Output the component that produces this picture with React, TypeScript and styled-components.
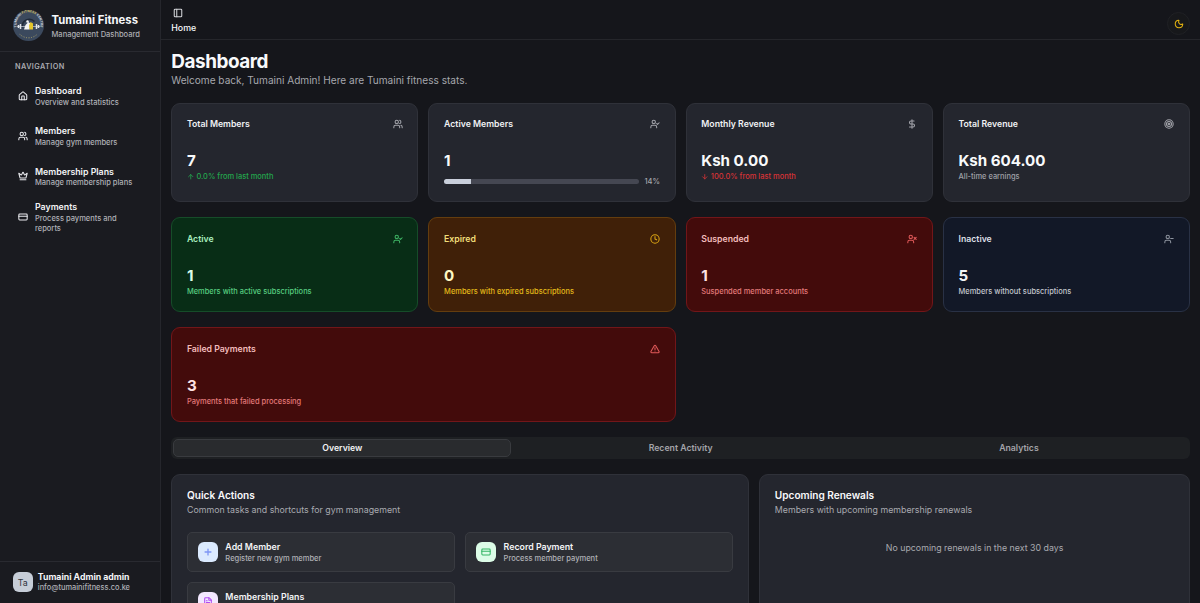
import React from "react";
import styled, { createGlobalStyle } from "styled-components";
import {
  ArrowDown,
  ArrowUp,
  Clock,
  CreditCard,
  Crown,
  DollarSign,
  FileText,
  House,
  Moon,
  PanelLeft,
  Plus,
  Target,
  TriangleAlert,
  UserCheck,
  UserMinus,
  Users,
  UserX,
} from "lucide-react";

const GlobalStyle = createGlobalStyle`
  *, *::before, *::after { box-sizing: border-box; }
  body {
    margin: 0;
    background: #15161b;
    color: #f8f9fb;
    font-family: Inter, "Liberation Sans", sans-serif;
    overflow: hidden;
  }
  svg { display: block; flex: none; }
  .lucide { stroke-width: 2.5; }
  h1, h2, h3, p { margin: 0; font-weight: inherit; font-size: inherit; }
`;

const Shell = styled.div`
  display: flex;
  height: 603px;
  overflow: hidden;
`;

const Sidebar = styled.aside`
  width: 161px;
  flex: none;
  display: flex;
  flex-direction: column;
  background: #1a1b20;
  border-right: 1px solid #25262c;
`;

const Brand = styled.header`
  display: flex;
  align-items: center;
  gap: 7.5px;
  height: 52px;
  padding: 0 0 1px 13px;
  border-bottom: 1px solid #292a30;
`;

const BrandText = styled.div`
  padding-top: 2px;
`;

const BrandName = styled.p`
  font-size: 11.28px;
  line-height: 14px;
  font-weight: 700;
  color: #f6f7f9;
`;

const BrandSub = styled.p`
  font-size: 7.52px;
  line-height: 10px;
  margin-top: 3px;
  font-weight: 500;
  color: #adaeb4;
`;

const NavLabel = styled.p`
  padding: 10px 15px 0;
  font-size: 7.3px;
  line-height: 10px;
  font-weight: 600;
  letter-spacing: 0.42px;
  color: #a9aaaf;
`;

const Nav = styled.nav`
  flex: 1;
  display: flex;
  flex-direction: column;
  padding: 3.7px 20px 0 17.6px;
`;

const NavItem = styled.a`
  display: flex;
  align-items: center;
  gap: 7.4px;
  height: 40.3px;
  color: #e9eaee;
`;

const ItemText = styled.div`
  flex: 1;
  padding-top: 1px;
`;

const ItemTitle = styled.p`
  font-size: 8.8px;
  line-height: 12px;
  font-weight: 600;
  color: #f3f4f6;
`;

const ItemSub = styled.p`
  margin-top: 0.6px;
  font-size: 7.52px;
  line-height: 10px;
  color: #b0b1b7;
  font-weight: 500;
`;

const UserBar = styled.footer`
  display: flex;
  align-items: center;
  gap: 5px;
  height: 42px;
  padding: 0 0 0.6px 12.6px;
  border-top: 1px solid #292a30;
`;

const Avatar = styled.div`
  display: grid;
  place-items: center;
  width: 20.2px;
  height: 20.2px;
  border-radius: 6px;
  background: #c6cdd7;
  color: #30343c;
  font-size: 8.8px;
`;

const UserName = styled.p`
  font-size: 8.72px;
  line-height: 11px;
  font-weight: 700;
  color: #f4f5f7;
`;

const UserMail = styled.p`
  font-size: 7.42px;
  line-height: 10px;
  font-weight: 500;
  color: #b0b1b7;
`;

const Main = styled.main`
  flex: 1;
  min-width: 0;
  display: flex;
  flex-direction: column;
`;

const TopBar = styled.header`
  display: flex;
  justify-content: space-between;
  height: 40px;
  flex: none;
  padding: 8px 10px 0 10.3px;
  border-bottom: 1px solid #25262b;
`;

const Crumbs = styled.div`
  display: flex;
  flex-direction: column;
  gap: 4.2px;
  font-size: 8.82px;
  line-height: 12px;
  font-weight: 500;
  svg { margin-left: 1.7px; color: #d4d5d9; }
`;

const ThemeButton = styled.button`
  display: grid;
  place-items: center;
  width: 23px;
  height: 23px;
  margin-top: 4px;
  padding: 0;
  border: 1px solid #202125;
  border-radius: 50%;
  background: #17181b;
  color: #e0b010;
`;

const Content = styled.div`
  display: flex;
  flex-direction: column;
  padding: 10px 10px 0 10.3px;
`;

const PageTitle = styled.h1`
  font-size: 18.9px;
  line-height: 23px;
  font-weight: 700;
  letter-spacing: -0.45px;
`;

const PageSub = styled.p`
  font-size: 10.08px;
  line-height: 14px;
  color: #a6a7ad;
`;

const CardGrid = styled.section`
  display: grid;
  grid-template-columns: repeat(4, 1fr);
  gap: 15.2px 10.08px;
  margin: 15.5px 0 15.1px;
`;

interface Tone {
  bg: string;
  border: string;
  title: string;
  value: string;
  note: string;
  icon: string;
}

const tones: Record<string, Tone> = {
  plain: { bg: "#24262e", border: "#2f3139", title: "#f0f1f4", value: "#f9fafb", note: "#a0a1a8", icon: "#a3a4ab" },
  green: { bg: "#082d16", border: "#164c29", title: "#a9edbf", value: "#dcfce7", note: "#58cd81", icon: "#3fb565" },
  yellow: { bg: "#402008", border: "#643d0e", title: "#f0de7a", value: "#fef9c3", note: "#e3b91a", icon: "#dba514" },
  red: { bg: "#430b0b", border: "#721619", title: "#f2bcbc", value: "#fee2e2", note: "#e37a7a", icon: "#e25a5a" },
  navy: { bg: "#121827", border: "#293145", title: "#dcdfe5", value: "#f3f4f6", note: "#c3c7ce", icon: "#8e949f" },
};

const StatCard = styled.article<{ $tone: Tone; $wide?: boolean; $tall?: boolean }>`
  grid-column: span ${(p) => (p.$wide ? 2 : 1)};
  height: ${(p) => (p.$tall ? "99.5px" : "94.6px")};
  padding: 14.6px 14.6px 0;
  border: 1px solid ${(p) => p.$tone.border};
  border-radius: 9px;
  background: ${(p) => p.$tone.bg};
`;

const StatHead = styled.div<{ $tone: Tone }>`
  display: flex;
  align-items: center;
  justify-content: space-between;
  height: 12.6px;
  margin-bottom: 20.5px;
  font-size: 8.72px;
  font-weight: 600;
  color: ${(p) => p.$tone.title};
  svg { color: ${(p) => p.$tone.icon}; }
`;

const StatValue = styled.p<{ $tone: Tone }>`
  font-size: 15.12px;
  line-height: 20.2px;
  font-weight: 700;
  color: ${(p) => p.$tone.value};
`;

const StatNote = styled.p<{ $color: string }>`
  display: flex;
  align-items: center;
  gap: 2px;
  margin-top: 0.7px;
  font-size: 7.47px;
  line-height: 10.1px;
  font-weight: 500;
  color: ${(p) => p.$color};
`;

const Meter = styled.div`
  display: flex;
  align-items: center;
  gap: 5px;
  margin-top: 5.3px;
  font-size: 7.56px;
  line-height: 10.1px;
  font-weight: 500;
  color: #a6a7ad;
`;

const Track = styled.div`
  flex: 1;
  height: 5px;
  border-radius: 3px;
  background: #454752;
  overflow: hidden;
`;

const Fill = styled.div`
  height: 100%;
  background: #c9cfdb;
`;

const TabList = styled.div`
  display: grid;
  grid-template-columns: repeat(3, 1fr);
  height: 22.7px;
  padding: 1.9px;
  border-radius: 6px;
  background: #1e2023;
`;

const Tab = styled.button<{ $active?: boolean }>`
  padding: 0 0 0.6px;
  border: 1px solid ${(p) => (p.$active ? "#393b3f" : "transparent")};
  border-radius: 5px;
  background: ${(p) => (p.$active ? "#292b2e" : "transparent")};
  color: ${(p) => (p.$active ? "#f1f2f4" : "#a3a4a9")};
  font: 600 8.72px Inter, "Liberation Sans", sans-serif;
`;

const Panels = styled.section`
  display: grid;
  grid-template-columns: repeat(7, 1fr);
  gap: 10.08px;
  margin-top: 15px;
`;

const Panel = styled.article<{ $span: number }>`
  grid-column: span ${(p) => p.$span};
  height: 200px;
  padding: 12.9px 14.7px;
  border: 1px solid #2f3139;
  border-radius: 9px;
  background: #24262e;
`;

const PanelTitle = styled.h2`
  font-size: 10.08px;
  line-height: 14px;
  font-weight: 600;
`;

const PanelSub = styled.p`
  margin-top: 1px;
  font-size: 8.82px;
  line-height: 14px;
  color: #a9aab0;
`;

const Empty = styled.p`
  margin-top: 23.8px;
  text-align: center;
  font-size: 8.82px;
  line-height: 13px;
  color: #a9aab0;
`;

const Actions = styled.div`
  display: grid;
  grid-template-columns: 1fr 1fr;
  gap: 10.08px;
  margin-top: 14.4px;
`;

const Action = styled.button`
  display: flex;
  align-items: center;
  gap: 7.6px;
  height: 40.3px;
  padding: 0 9.6px;
  border: 1px solid #393b41;
  border-radius: 5px;
  background: #2c2e34;
  text-align: left;
  font-family: inherit;
`;

const ActionIcon = styled.span<{ $bg: string; $fg: string }>`
  display: grid;
  place-items: center;
  width: 20.2px;
  height: 20.2px;
  border-radius: 6px;
  background: ${(p) => p.$bg};
  color: ${(p) => p.$fg};
  .lucide-plus { stroke-width: 3.2; }
`;

function Logo() {
  return (
    <svg width="31" height="31" viewBox="0 0 62 62">
      <defs>
        <path id="ring" d="M8.5 37 A24 24 0 1 1 53.5 37" />
      </defs>
      <circle cx="31" cy="31" r="31" fill="#3b495d" />
      <text fontSize="6.6" fontWeight="700" fill="#cfd5dd" fontFamily="Inter, sans-serif">
        <textPath href="#ring" startOffset="50%" textAnchor="middle">
          TUMAINI <tspan fill="#c9b764">FITNESS</tspan> CENTRE
        </textPath>
      </text>
      <path d="M19 35a14 14 0 0 1 24-12" fill="none" stroke="#202a39" strokeWidth="3" />
      <path d="M8 33h46" stroke="#bcc3cc" strokeWidth="1.6" />
      <path d="M11 30v6M15 28v10M47 28v10M51 30v6" stroke="#dfe3e8" strokeWidth="3" />
      <path d="M22 39l3-9 6-6 4 3-2 12z" fill="#f4f5f6" />
      <path d="M33 39l-1-8 3-7 5 3v12z" fill="#e3c62d" />
      <circle cx="29" cy="23" r="2.5" fill="#f1f2f3" />
      <path d="M13 48a25 25 0 0 0 36 0" fill="none" stroke="#a99f6b" strokeWidth="2" strokeDasharray="2 3" />
    </svg>
  );
}

const navItems = [
  { icon: House, title: "Dashboard", sub: "Overview and statistics" },
  { icon: Users, title: "Members", sub: "Manage gym members" },
  { icon: Crown, title: "Membership Plans", sub: "Manage membership plans" },
  { icon: CreditCard, title: "Payments", sub: "Process payments and reports" },
];

interface Stat {
  tone: string;
  title: string;
  value: string;
  icon: React.ElementType;
  note?: string;
  noteColor?: string;
  trend?: React.ElementType;
  percent?: number;
  wide?: boolean;
  tall?: boolean;
}

const stats: Stat[] = [
  { tone: "plain", tall: true, title: "Total Members", value: "7", icon: Users, note: "0.0% from last month", noteColor: "#23a64d", trend: ArrowUp },
  { tone: "plain", tall: true, title: "Active Members", value: "1", icon: UserCheck, percent: 14 },
  { tone: "plain", tall: true, title: "Monthly Revenue", value: "Ksh 0.00", icon: DollarSign, note: "100.0% from last month", noteColor: "#d93336", trend: ArrowDown },
  { tone: "plain", tall: true, title: "Total Revenue", value: "Ksh 604.00", icon: Target, note: "All-time earnings" },
  { tone: "green", title: "Active", value: "1", icon: UserCheck, note: "Members with active subscriptions" },
  { tone: "yellow", title: "Expired", value: "0", icon: Clock, note: "Members with expired subscriptions" },
  { tone: "red", title: "Suspended", value: "1", icon: UserX, note: "Suspended member accounts" },
  { tone: "navy", title: "Inactive", value: "5", icon: UserMinus, note: "Members without subscriptions" },
  { tone: "red", wide: true, title: "Failed Payments", value: "3", icon: TriangleAlert, note: "Payments that failed processing" },
];

const actions = [
  { icon: Plus, title: "Add Member", sub: "Register new gym member", bg: "#dbeafe", fg: "#7f97f5" },
  { icon: CreditCard, title: "Record Payment", sub: "Process member payment", bg: "#dcfce7", fg: "#34b565" },
  { icon: FileText, title: "Membership Plans", sub: "", bg: "#f3e8ff", fg: "#b04df0" },
];

export default function App() {
  return (
    <>
      <GlobalStyle />
      <Shell>
        <Sidebar>
          <Brand>
            <Logo />
            <BrandText>
              <BrandName>Tumaini Fitness</BrandName>
              <BrandSub>Management Dashboard</BrandSub>
            </BrandText>
          </Brand>
          <NavLabel>NAVIGATION</NavLabel>
          <Nav>
            {navItems.map(({ icon: Icon, title, sub }) => (
              <NavItem key={title}>
                <Icon size={10} />
                <ItemText>
                  <ItemTitle>{title}</ItemTitle>
                  <ItemSub>{sub}</ItemSub>
                </ItemText>
              </NavItem>
            ))}
          </Nav>
          <UserBar>
            <Avatar>Ta</Avatar>
            <div>
              <UserName>Tumaini Admin admin</UserName>
              <UserMail>info@tumainifitness.co.ke</UserMail>
            </div>
          </UserBar>
        </Sidebar>
        <Main>
          <TopBar>
            <Crumbs>
              <PanelLeft size={10} />
              Home
            </Crumbs>
            <ThemeButton aria-label="Toggle theme">
              <Moon size={10} />
            </ThemeButton>
          </TopBar>
          <Content>
            <PageTitle>Dashboard</PageTitle>
            <PageSub>Welcome back, Tumaini Admin! Here are Tumaini fitness stats.</PageSub>
            <CardGrid>
              {stats.map(({ icon: Icon, trend: Trend, ...s }) => {
                const tone = tones[s.tone];
                return (
                  <StatCard key={s.title} $tone={tone} $wide={s.wide} $tall={s.tall}>
                    <StatHead $tone={tone}>
                      {s.title}
                      <Icon size={10} />
                    </StatHead>
                    <StatValue $tone={tone}>{s.value}</StatValue>
                    {s.note && (
                      <StatNote $color={s.noteColor ?? tone.note}>
                        {Trend && <Trend size={7.5} />}
                        {s.note}
                      </StatNote>
                    )}
                    {s.percent !== undefined && (
                      <Meter>
                        <Track>
                          <Fill style={{ width: `${s.percent}%` }} />
                        </Track>
                        {s.percent}%
                      </Meter>
                    )}
                  </StatCard>
                );
              })}
            </CardGrid>
            <TabList>
              <Tab $active>Overview</Tab>
              <Tab>Recent Activity</Tab>
              <Tab>Analytics</Tab>
            </TabList>
            <Panels>
              <Panel $span={4}>
                <PanelTitle>Quick Actions</PanelTitle>
                <PanelSub>Common tasks and shortcuts for gym management</PanelSub>
                <Actions>
                  {actions.map(({ icon: Icon, title, sub, bg, fg }) => (
                    <Action key={title}>
                      <ActionIcon $bg={bg} $fg={fg}>
                        <Icon size={10} />
                      </ActionIcon>
                      <ItemText>
                        <ItemTitle>{title}</ItemTitle>
                        <ItemSub>{sub || "\u00a0"}</ItemSub>
                      </ItemText>
                    </Action>
                  ))}
                </Actions>
              </Panel>
              <Panel $span={3}>
                <PanelTitle>Upcoming Renewals</PanelTitle>
                <PanelSub>Members with upcoming membership renewals</PanelSub>
                <Empty>No upcoming renewals in the next 30 days</Empty>
              </Panel>
            </Panels>
          </Content>
        </Main>
      </Shell>
    </>
  );
}
